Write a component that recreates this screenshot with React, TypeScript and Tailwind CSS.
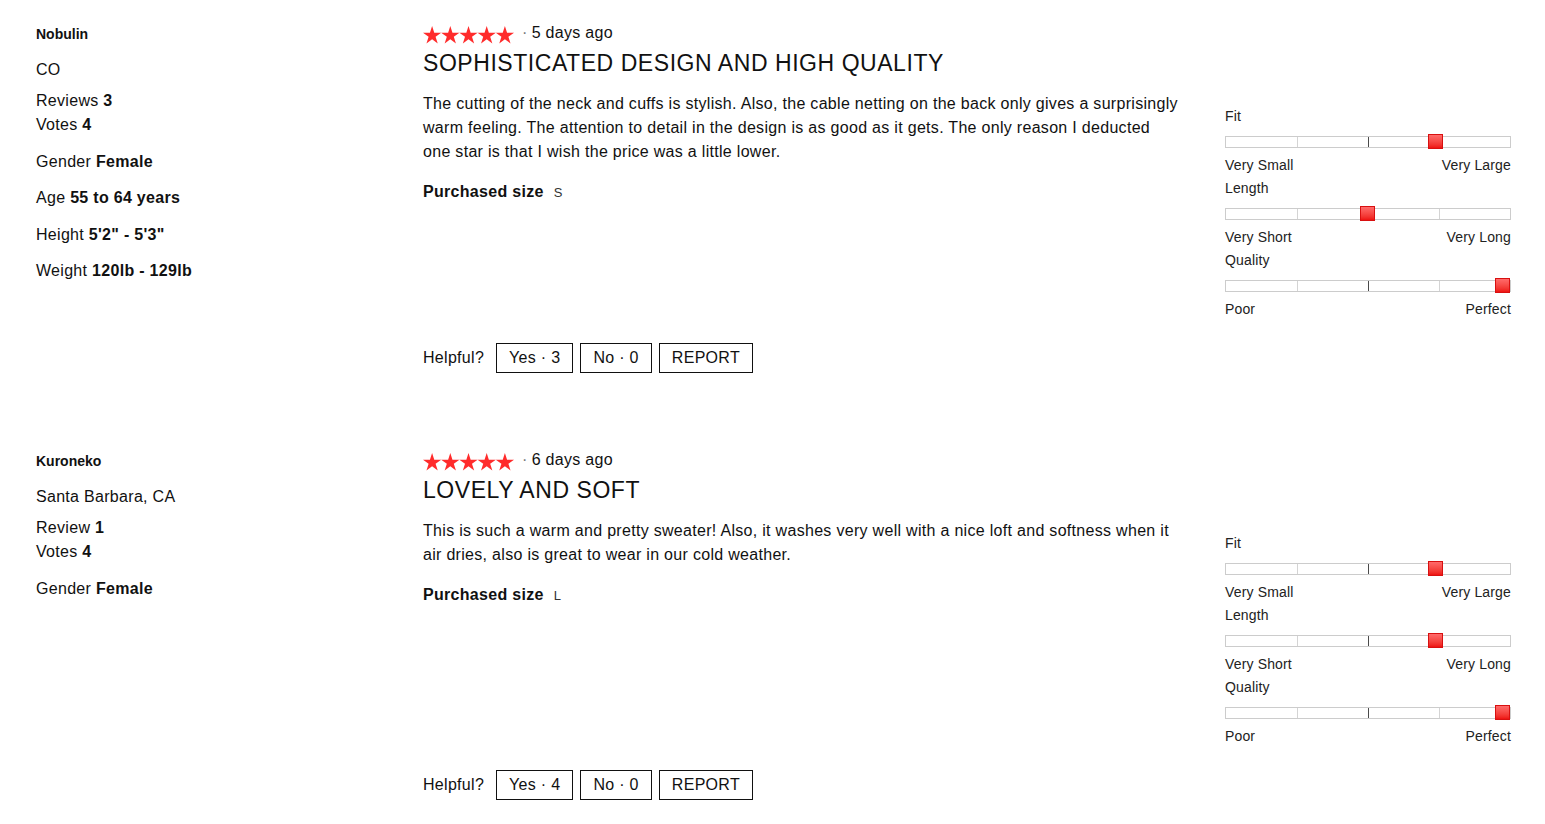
import React from "react";

interface Rating {
  label: string;
  low: string;
  high: string;
  value: number;
}

interface Review {
  name: string;
  location: string;
  reviewsLabel: string;
  reviews: number;
  votes: number;
  details: { label: string; value: string }[];
  when: string;
  title: string;
  body: string;
  size: string;
  yes: number;
  no: number;
  ratings: Rating[];
}

const REVIEWS: Review[] = [
  {
    name: "Nobulin",
    location: "CO",
    reviewsLabel: "Reviews",
    reviews: 3,
    votes: 4,
    details: [
      { label: "Gender", value: "Female" },
      { label: "Age", value: "55 to 64 years" },
      { label: "Height", value: "5'2\" - 5'3\"" },
      { label: "Weight", value: "120lb - 129lb" },
    ],
    when: "5 days ago",
    title: "Sophisticated design and high quality",
    body: "The cutting of the neck and cuffs is stylish. Also, the cable netting on the back only gives a surprisingly warm feeling. The attention to detail in the design is as good as it gets. The only reason I deducted one star is that I wish the price was a little lower.",
    size: "S",
    yes: 3,
    no: 0,
    ratings: [
      { label: "Fit", low: "Very Small", high: "Very Large", value: 0.75 },
      { label: "Length", low: "Very Short", high: "Very Long", value: 0.5 },
      { label: "Quality", low: "Poor", high: "Perfect", value: 1 },
    ],
  },
  {
    name: "Kuroneko",
    location: "Santa Barbara, CA",
    reviewsLabel: "Review",
    reviews: 1,
    votes: 4,
    details: [{ label: "Gender", value: "Female" }],
    when: "6 days ago",
    title: "Lovely and soft",
    body: "This is such a warm and pretty sweater! Also, it washes very well with a nice loft and softness when it air dries, also is great to wear in our cold weather.",
    size: "L",
    yes: 4,
    no: 0,
    ratings: [
      { label: "Fit", low: "Very Small", high: "Very Large", value: 0.75 },
      { label: "Length", low: "Very Short", high: "Very Long", value: 0.75 },
      { label: "Quality", low: "Poor", high: "Perfect", value: 1 },
    ],
  },
];

// five-point star, outer radius r, centred in its box
function starPoints(cx: number, cy: number, r: number) {
  const inner = r * 0.382;
  const pts: string[] = [];
  for (let i = 0; i < 10; i++) {
    const rad = i % 2 === 0 ? r : inner;
    const a = -Math.PI / 2 + (i * Math.PI) / 5;
    pts.push(`${(cx + rad * Math.cos(a)).toFixed(2)},${(cy + rad * Math.sin(a)).toFixed(2)}`);
  }
  return pts.join(" ");
}

function Stars() {
  const r = 9.6;
  return (
    <svg width="92" height="18" viewBox="0 0 92 18" className="block">
      {[0, 1, 2, 3, 4].map((i) => (
        <polygon key={i} points={starPoints(9.1 + i * 18.2, 9.7, r)} fill="#ff2b2b" />
      ))}
    </svg>
  );
}

function Slider({ r }: { r: Rating }) {
  return (
    <div className="text-[14px] leading-4 tracking-[0.15px] text-[#222]">
      <div>{r.label}</div>
      <div className="relative mt-3 h-3 border border-[#cccccc] bg-white">
        <div className="absolute left-1/4 top-0 h-full w-px bg-[#d4d4d4]" />
        <div className="absolute left-1/2 top-0 h-full w-px bg-[#4a4a4a]" />
        <div className="absolute left-3/4 top-0 h-full w-px bg-[#d4d4d4]" />
        <div
          className="absolute top-[-3px] h-[15px] w-[15px] border border-[#d81010] bg-linear-to-b from-[#ff6a6a] to-[#ee0f0f]"
          style={{ left: `calc(${r.value} * (100% - 14px) - 1px)` }}
        />
      </div>
      <div className="mt-[9px] flex justify-between">
        <span>{r.low}</span>
        <span>{r.high}</span>
      </div>
    </div>
  );
}

function ReviewBlock({ review }: { review: Review }) {
  return (
    <div className="flex">
      <aside className="w-[387px] shrink-0 text-[16px] leading-6 tracking-[0.3px] text-[#111]">
        <div className="mt-[6px] text-[14px] font-bold leading-4 tracking-normal">{review.name}</div>
        <p className="mt-[16px]">{review.location}</p>
        <div className="mt-[7px]">
          <p>
            {review.reviewsLabel} <b>{review.reviews}</b>
          </p>
          <p>
            Votes <b>{review.votes}</b>
          </p>
        </div>
        {review.details.map((d) => (
          <p key={d.label} className="mt-[12.5px]">
            {d.label} <b>{d.value}</b>
          </p>
        ))}
      </aside>

      <div className="flex flex-1 flex-col">
        <div className="min-h-[323px]">
          <div className="flex h-6 items-center text-[16px] tracking-[0.3px] text-[#111]">
            <span className="mt-[5px]">
              <Stars />
            </span>
            <span className="ml-[7px] mt-px text-[#777]">·</span>
            <span className="ml-[4px] mt-px">{review.when}</span>
          </div>
          <h2 className="mt-[5px] text-[23px] uppercase leading-7 tracking-[0.55px] text-[#111]">
            {review.title}
          </h2>
          <div className="mt-[15px] flex">
            <div className="w-[757px] shrink-0 text-[16px] tracking-[0.3px] text-[#111]">
              <p className="leading-6">{review.body}</p>
              <p className="mt-4 leading-6">
                <b>Purchased size</b>
                <span className="ml-[10px] text-[13px] text-[#333]">{review.size}</span>
              </p>
            </div>
            <div className="ml-auto mt-4 flex w-[286px] flex-col gap-[7px]">
              {review.ratings.map((r) => (
                <Slider key={r.label} r={r} />
              ))}
            </div>
          </div>
        </div>

        <div className="flex items-center text-[16px] tracking-[0.3px] text-[#111]">
          <span>Helpful?</span>
          <div className="ml-3 flex gap-[7px]">
            <button className="h-[30px] border border-[#111] px-3 leading-6">Yes · {review.yes}</button>
            <button className="h-[30px] border border-[#111] px-3 leading-6">No · {review.no}</button>
            <button className="h-[30px] border border-[#111] px-3 leading-6">REPORT</button>
          </div>
        </div>
      </div>
    </div>
  );
}

export default function App() {
  return (
    <div
      className="min-h-screen bg-white pl-9 pr-[34px] pt-5"
      style={{ fontFamily: '"Liberation Sans", Arial, sans-serif' }}
    >
      {REVIEWS.map((r, i) => (
        <div key={r.name} className={i > 0 ? "mt-[74px]" : ""}>
          <ReviewBlock review={r} />
        </div>
      ))}
    </div>
  );
}
